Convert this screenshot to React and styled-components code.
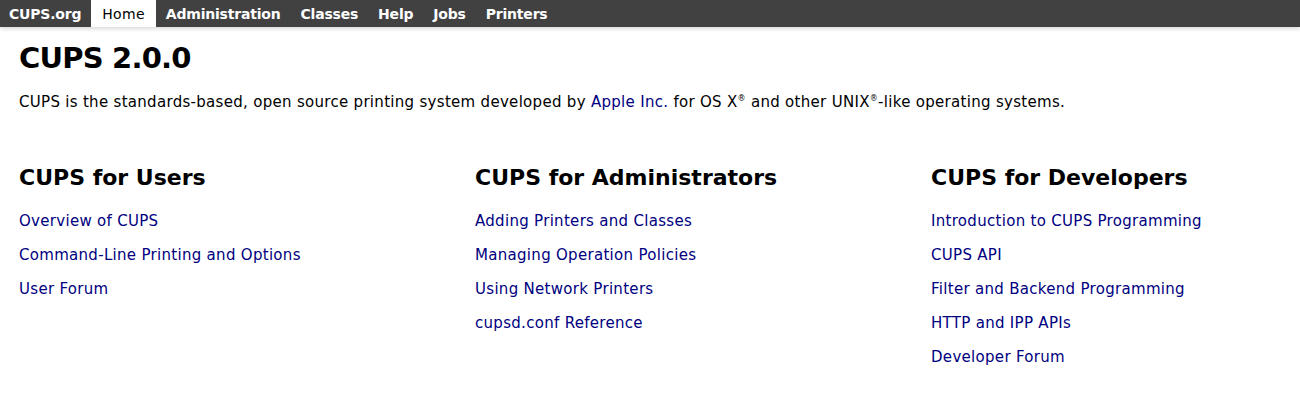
import styled, { createGlobalStyle } from 'styled-components'

const Global = createGlobalStyle`
  body {
    margin: 0;
    background: #fff;
    font-family: "DejaVu Sans", "Lucida Grande", sans-serif;
    color: #000;
  }
`

const navItems = ['Home', 'Administration', 'Classes', 'Help', 'Jobs', 'Printers']

const columns = [
  {
    title: 'CUPS for Users',
    links: ['Overview of CUPS', 'Command-Line Printing and Options', 'User Forum'],
  },
  {
    title: 'CUPS for Administrators',
    links: ['Adding Printers and Classes', 'Managing Operation Policies', 'Using Network Printers', 'cupsd.conf Reference'],
  },
  {
    title: 'CUPS for Developers',
    links: ['Introduction to CUPS Programming', 'CUPS API', 'Filter and Backend Programming', 'HTTP and IPP APIs', 'Developer Forum'],
  },
]

const App = () => {
  return (
    <>
      <Global />
      <NavBar>
        <NavLink>CUPS.org</NavLink>
        {navItems.map((n) => (
          <NavLink key={n} $active={n === 'Home'}>{n}</NavLink>
        ))}
      </NavBar>
      <Body>
        <Title>CUPS 2.0.0</Title>
        <Intro>
          CUPS is the standards-based, open source printing system developed by <a href="#">Apple Inc.</a> for OS X<sup>®</sup> and other UNIX<sup>®</sup>-like operating systems.
        </Intro>
        <Columns>
          {columns.map((c) => (
            <Column key={c.title}>
              <h2>{c.title}</h2>
              {c.links.map((l) => (
                <p key={l}><a href="#">{l}</a></p>
              ))}
            </Column>
          ))}
        </Columns>
      </Body>
    </>
  )
}

export default App

const NavBar = styled.div`
  display: flex;
  height: 27px;
  background: #414141;
  box-shadow: 0 2px 4px rgba(0, 0, 0, 0.15);
`

const NavLink = styled.a`
  display: flex;
  align-items: center;
  padding: 1px ${(p) => (p.$active ? '11px' : '10px')} 0;
  font-size: 14px;
  font-weight: ${(p) => (p.$active ? 400 : 700)};
  color: ${(p) => (p.$active ? '#000' : '#fff')};
  background: ${(p) => (p.$active ? '#fff' : 'transparent')};
  white-space: nowrap;
  letter-spacing: ${(p) => (p.$active ? '0.3px' : '-0.2px')};
  &:first-child {
    padding-left: 9px;
  }
`

const Body = styled.div`
  padding: 0 19px;
`

const Title = styled.h1`
  margin: 12px 0 0;
  font-size: 29px;
  font-weight: 700;
  line-height: 38px;
  letter-spacing: -0.8px;
`

const Intro = styled.p`
  margin: 15px 0 0;
  font-size: 15px;
  line-height: 20px;
  letter-spacing: 0.3px;
  a {
    color: #000080;
    text-decoration: none;
  }
  sup {
    font-size: 8px;
    vertical-align: 6px;
    line-height: 0;
  }
`

const Columns = styled.div`
  display: grid;
  grid-template-columns: 456px 456px 1fr;
  margin-top: 51px;
`

const Column = styled.div`
  h2 {
    margin: 0 0 11px;
    font-size: 22px;
    line-height: 30px;
    font-weight: 700;
    letter-spacing: 0;
  }
  p {
    margin: 0;
    font-size: 15px;
    line-height: 34px;
    letter-spacing: 0.3px;
  }
  a {
    color: #000080;
    text-decoration: none;
  }
`
